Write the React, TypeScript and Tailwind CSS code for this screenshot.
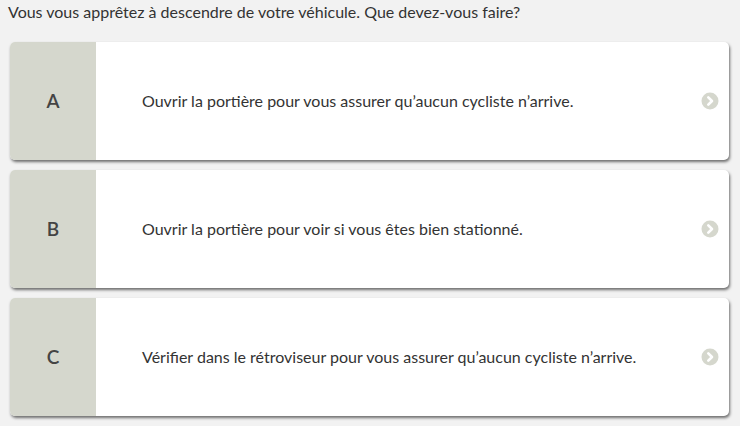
import React from "react";

const answers = [
  { l: "A", t: "Ouvrir la portière pour vous assurer qu’aucun cycliste n’arrive." },
  { l: "B", t: "Ouvrir la portière pour voir si vous êtes bien stationné." },
  { l: "C", t: "Vérifier dans le rétroviseur pour vous assurer qu’aucun cycliste n’arrive." },
];

function Chevron() {
  return (
    <svg width="18" height="18" viewBox="0 0 18 18">
      <circle cx="9" cy="9" r="8.5" fill="#d5d7cd" />
      <path d="M7.3 5.3 L11 9 L7.3 12.7" stroke="#fff" strokeWidth="2.6" fill="none" strokeLinecap="round" strokeLinejoin="round" />
    </svg>
  );
}

export default function App() {
  return (
    <div className="w-[740px] h-[426px] bg-[#f2f2f2] overflow-hidden" style={{ fontFamily: "Lato, 'Open Sans', sans-serif" }}>
      <div className="pl-[8px] pt-[1px] text-[16px] leading-[22px] text-[#333]">
        Vous vous apprêtez à descendre de votre véhicule. Que devez-vous faire?
      </div>
      <div className="flex flex-col gap-[10px] pl-[10px] pr-[11px] pt-[19px]">
        {answers.map((a) => (
          <div key={a.l} className="flex h-[118px] bg-white rounded-[5px] overflow-hidden shadow-[1px_2px_3px_rgba(0,0,0,0.55)]">
            <div className="w-[86px] bg-[#d5d7cd] flex items-center justify-center text-[19px] font-semibold text-[#444]">
              {a.l}
            </div>
            <div className="flex-1 flex items-center pl-[46px] text-[16px] text-[#333]">{a.t}</div>
            <div className="flex items-center pr-[10px]">
              <Chevron />
            </div>
          </div>
        ))}
      </div>
    </div>
  );
}
